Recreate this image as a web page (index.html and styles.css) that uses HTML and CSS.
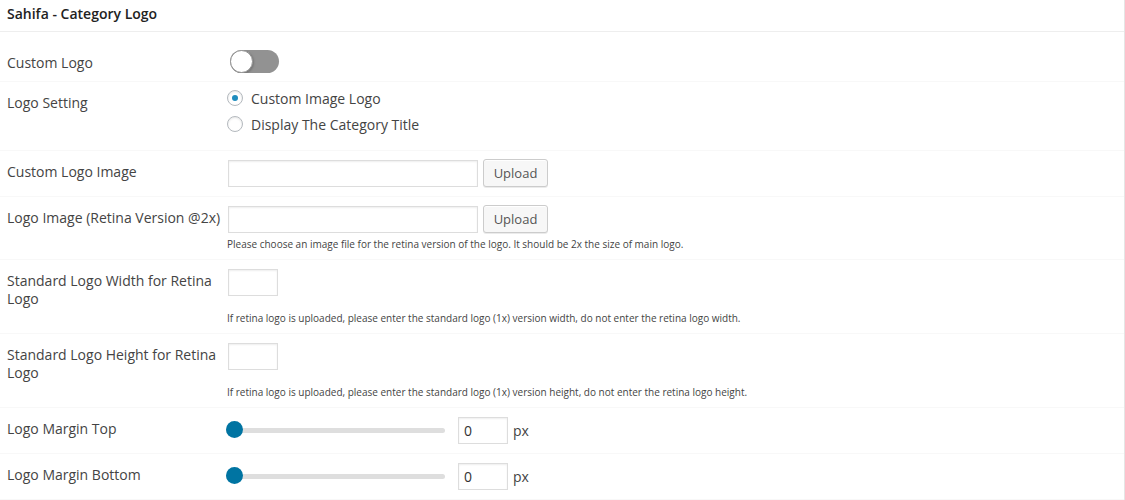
FILE: index.html
```html
<!DOCTYPE html>
<html lang="en">
<head>
<meta charset="utf-8">
<title>Sahifa - Category Logo</title>
<link rel="stylesheet" href="styles.css">
</head>
<body>
<form class="panel">
  <h3 class="panel-title">Sahifa - Category Logo</h3>
  <div class="options">
    <div class="option">
      <label class="option-label" for="custom-logo">Custom Logo</label>
      <div class="option-body"><input class="toggle" type="checkbox" role="switch" id="custom-logo"></div>
    </div>
    <div class="option" role="radiogroup" aria-labelledby="logo-setting">
      <span class="option-label" id="logo-setting">Logo Setting</span>
      <div class="option-body">
        <label class="choice"><input class="radio" type="radio" name="setting" checked>Custom Image Logo</label>
        <label class="choice"><input class="radio" type="radio" name="setting">Display The Category Title</label>
      </div>
    </div>
    <div class="option">
      <label class="option-label" for="logo-image">Custom Logo Image</label>
      <div class="option-body">
        <div class="controls"><input class="field field-wide" type="text" id="logo-image"><button class="button" type="button">Upload</button></div>
      </div>
    </div>
    <div class="option">
      <label class="option-label" for="logo-retina">Logo Image (Retina Version @2x)</label>
      <div class="option-body">
        <div class="controls"><input class="field field-wide" type="text" id="logo-retina"><button class="button" type="button">Upload</button></div>
        <p class="hint">Please choose an image file for the retina version of the logo. It should be 2x the size of main logo.</p>
      </div>
    </div>
    <div class="option">
      <label class="option-label" for="logo-width">Standard Logo Width for Retina Logo</label>
      <div class="option-body">
        <div class="controls"><input class="field field-small" type="text" id="logo-width"></div>
        <p class="hint hint-spaced">If retina logo is uploaded, please enter the standard logo (1x) version width, do not enter the retina logo width.</p>
      </div>
    </div>
    <div class="option">
      <label class="option-label" for="logo-height">Standard Logo Height for Retina Logo</label>
      <div class="option-body">
        <div class="controls"><input class="field field-small" type="text" id="logo-height"></div>
        <p class="hint hint-spaced">If retina logo is uploaded, please enter the standard logo (1x) version height, do not enter the retina logo height.</p>
      </div>
    </div>
    <div class="option">
      <label class="option-label" for="margin-top">Logo Margin Top</label>
      <div class="option-body">
        <div class="controls slider-controls"><input class="slider" type="range" min="0" max="100" value="0" aria-label="Logo Margin Top slider"><input class="field field-small" type="text" id="margin-top" value="0"><span>px</span></div>
      </div>
    </div>
    <div class="option">
      <label class="option-label" for="margin-bottom">Logo Margin Bottom</label>
      <div class="option-body">
        <div class="controls slider-controls"><input class="slider" type="range" min="0" max="100" value="0" aria-label="Logo Margin Bottom slider"><input class="field field-small" type="text" id="margin-bottom" value="0"><span>px</span></div>
      </div>
    </div>
  </div>
</form>
</body>
</html>
```
FILE: styles.css
```css
*, *::before { box-sizing: border-box; }

body {
  margin: 0;
  background: #fff;
  color: #444;
  font: 14px/18px "Open Sans", sans-serif;
}

.panel { border-right: 1px solid #e5e5e5; }

.panel-title {
  margin: 0;
  padding: 5px 7px 8px;
  border-bottom: 1px solid #eee;
  color: #222;
  font-size: 14px;
  font-weight: 600;
  line-height: 18px;
}

.options { padding-top: 10px; }

.option {
  display: flex;
  padding: 8px 7px;
  border-bottom: 1px solid #f8f8f8;
}

.option-label {
  flex: none;
  width: 220px;
  padding-top: 4px;
}

.option-body { flex: 1; }

.toggle {
  display: block;
  appearance: none;
  width: 49px;
  height: 23px;
  margin: 0 3px;
  border-radius: 12px;
  background: #929292;
  overflow: hidden;
}

.toggle::before {
  content: "";
  display: block;
  width: 23px;
  height: 23px;
  border: 1px solid #929292;
  border-radius: 50%;
  background: #fff;
  box-shadow: 1px 1px 2px #777;
}

.toggle:checked { background: #0074a2; }
.toggle:checked::before { margin-left: auto; }

.choice {
  display: flex;
  gap: 8px;
  padding-bottom: 8px;
}

.radio {
  appearance: none;
  display: grid;
  place-items: center;
  width: 16px;
  height: 16px;
  margin: 0;
  border: 1px solid #b4b9be;
  border-radius: 50%;
  background: #fff;
  box-shadow: inset 0 1px 2px rgba(0, 0, 0, 0.1);
}

.radio:checked::before {
  content: "";
  width: 6px;
  height: 6px;
  border-radius: 50%;
  background: #1e8cbe;
}

.controls {
  display: flex;
  align-items: center;
  gap: 5px;
  height: 29px;
  padding-left: 1px;
}

.field {
  height: 27px;
  margin: 0;
  padding: 3px 5px;
  border: 1px solid #ddd;
  background: #fff;
  color: #333;
  font: inherit;
  box-shadow: inset 0 1px 2px rgba(0, 0, 0, 0.07);
}

.field-wide { width: 250px; }
.field-small { width: 50px; }

.button {
  align-self: flex-start;
  width: 65px;
  height: 28px;
  padding: 0;
  border: 1px solid #ccc;
  border-radius: 3px;
  background: #f7f7f7;
  color: #555;
  font: 13px/26px "Open Sans", sans-serif;
  box-shadow: inset 0 1px 0 #fff, 0 1px 0 rgba(0, 0, 0, 0.08);
}

.hint {
  margin: 0;
  padding-top: 4px;
  color: #444;
  font-size: 10px;
  line-height: 13px;
}

.hint-spaced { padding-top: 15px; }

.slider-controls { padding-left: 0; }

.slider {
  appearance: none;
  width: 219px;
  height: 17px;
  margin: 0 8px 0 -1px;
  background: transparent;
}

.slider::-webkit-slider-runnable-track {
  height: 5px;
  border-radius: 3px;
  background: #dedede;
}

.slider::-webkit-slider-thumb {
  appearance: none;
  width: 17px;
  height: 17px;
  margin-top: -7px;
  border-radius: 50%;
  background: #0074a2;
}
```
